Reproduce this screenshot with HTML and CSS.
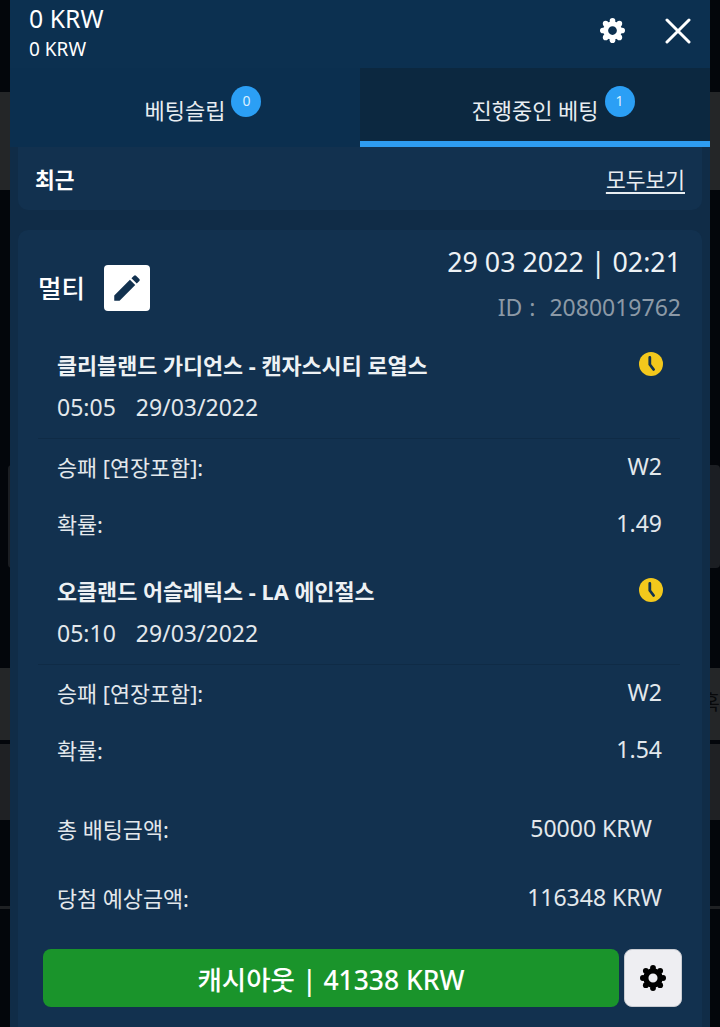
FILE: index.html
```html
<!DOCTYPE html>
<html lang="ko">
  <head>
    <meta charset="UTF-8" />
    <meta name="viewport" content="width=device-width, initial-scale=1.0" />
    <title>베팅슬립</title>
    <link rel="stylesheet" href="styles.css">
  </head>
  <body>
    <svg class="icon-defs" width="0" height="0">
      <defs>
        <g id="gear">
          <circle cx="12" cy="12" r="6.6" fill="none" stroke="currentColor" stroke-width="4.8" />
          <circle cx="12" cy="2.7" r="2.7" />
          <circle cx="18.6" cy="5.4" r="2.7" />
          <circle cx="21.3" cy="12" r="2.7" />
          <circle cx="18.6" cy="18.6" r="2.7" />
          <circle cx="12" cy="21.3" r="2.7" />
          <circle cx="5.4" cy="18.6" r="2.7" />
          <circle cx="2.7" cy="12" r="2.7" />
          <circle cx="5.4" cy="5.4" r="2.7" />
        </g>
      </defs>
    </svg>

    <div class="backdrop">
      <div class="strip dark h92"></div>
      <div class="strip gray h98"></div>
      <div class="strip dark h275"></div>
      <div class="strip dark h103"><div class="strip-card"></div></div>
      <div class="strip dark h100"></div>
      <div class="strip gray h72"><span class="strip-text">혹</span></div>
      <div class="strip dark h4"></div>
      <div class="strip gray-dark h76"></div>
      <div class="strip dark h86"></div>
      <div class="strip dark-end"></div>
    </div>

    <div class="panel">
      <header class="top">
        <div class="balance">
          <div class="balance-main">0 KRW</div>
          <div class="balance-sub">0 KRW</div>
        </div>
        <div class="top-icons">
          <svg class="top-gear" viewBox="0 0 24 24"><use href="#gear" /></svg>
          <svg class="top-close" viewBox="0 0 26 26"><path d="M2 2l22 22M24 2L2 24" /></svg>
        </div>
      </header>

      <div class="tabs">
        <div class="tab">
          <span class="tab-label">베팅슬립<span class="badge">0</span></span>
        </div>
        <div class="tab active">
          <span class="tab-label">진행중인 베팅<span class="badge">1</span></span>
        </div>
      </div>

      <div class="content">
        <div class="recent">
          <span class="recent-title">최근</span>
          <a class="recent-all" href="#">모두보기</a>
        </div>

        <div class="bet-card">
          <div class="bet-head">
            <div class="bet-type">
              <span>멀티</span>
              <button class="edit-btn">
                <svg viewBox="0 0 24 24"><path d="M3 17.25V21h3.75L17.81 9.94l-3.75-3.75L3 17.25zM20.71 7.04a1 1 0 0 0 0-1.41l-2.34-2.34a1 1 0 0 0-1.41 0l-1.83 1.83 3.75 3.75 1.83-1.83z" /></svg>
              </button>
            </div>
            <div class="bet-meta">
              <div class="bet-date">29 03 2022 | 02:21</div>
              <div class="bet-id">ID :&nbsp; 2080019762</div>
            </div>
          </div>

          <div class="game">
            <div class="game-title">
              <span>클리블랜드 가디언스 - 캔자스시티 로열스</span>
              <svg class="clock" viewBox="0 0 24 24"><circle cx="12" cy="12" r="12" /><path d="M10.8 5.5v7l3.8 5" /></svg>
            </div>
            <div class="game-time"><span>05:05</span><span>29/03/2022</span></div>
          </div>
          <div class="row row-first"><span>승패 [연장포함]:</span><span class="value">W2</span></div>
          <div class="row"><span>확률:</span><span class="value">1.49</span></div>

          <div class="game game-next">
            <div class="game-title">
              <span>오클랜드 어슬레틱스 - LA 에인절스</span>
              <svg class="clock" viewBox="0 0 24 24"><circle cx="12" cy="12" r="12" /><path d="M10.8 5.5v7l3.8 5" /></svg>
            </div>
            <div class="game-time"><span>05:10</span><span>29/03/2022</span></div>
          </div>
          <div class="row row-first"><span>승패 [연장포함]:</span><span class="value">W2</span></div>
          <div class="row"><span>확률:</span><span class="value">1.54</span></div>

          <div class="row total"><span>총 배팅금액:</span><span class="value total-amount">50000 KRW</span></div>
          <div class="row win"><span>당첨 예상금액:</span><span class="value">116348 KRW</span></div>

          <div class="actions">
            <button class="cashout">캐시아웃 | 41338 KRW</button>
            <button class="cashout-gear">
              <svg viewBox="0 0 24 24"><use href="#gear" /></svg>
            </button>
          </div>
        </div>
      </div>
    </div>
  </body>
</html>
```

FILE: styles.css
```css
* {
  box-sizing: border-box;
}

html,
body {
  height: 100%;
}

body {
  margin: 0;
  position: relative;
  overflow: hidden;
  background-color: #02050a;
  color: #fff;
  font-family: "Noto Sans", "Noto Sans CJK KR", sans-serif;
}

.icon-defs {
  position: absolute;
}

.backdrop {
  display: flex;
  flex-direction: column;
  height: 100%;
}

.strip {
  flex-shrink: 0;
}

.dark {
  background-color: #03060b;
}

.gray {
  background-color: #242628;
}

.gray-dark {
  background-color: #1f2124;
}

.h4 {
  height: 4px;
}

.h92 {
  height: 92px;
}

.h98 {
  height: 98px;
}

.h275 {
  height: 275px;
}

.h103 {
  height: 103px;
}

.h100 {
  height: 100px;
}

.h72 {
  height: 72px;
  padding-top: 20px;
  text-align: right;
}

.h76 {
  height: 76px;
}

.h86 {
  height: 86px;
}

.dark-end {
  flex: 1;
  background-color: #03060b;
  border-top: 3px solid #1f2124;
}

.strip-card {
  height: 100%;
  margin-left: 8px;
  border-radius: 4px;
  background-color: #1b1e23;
}

.strip-text {
  font-size: 20px;
  line-height: 30px;
  color: #08090b;
}

/* drawer over the page */
.panel {
  position: absolute;
  top: 0;
  bottom: 0;
  left: 10px;
  width: 700px;
  display: flex;
  flex-direction: column;
  background-color: #0c3050;
}

.top {
  height: 68px;
  flex-shrink: 0;
  display: flex;
  justify-content: space-between;
  padding-left: 19px;
}

.balance-main {
  margin-top: 2px;
  font-size: 24.8px;
  line-height: 32px;
}

.balance-sub {
  margin-top: 3px;
  font-size: 19px;
  line-height: 25px;
}

.top-icons {
  display: flex;
  align-items: center;
  gap: 40px;
  padding-right: 19px;
  padding-bottom: 7px;
}

.top-gear {
  width: 25px;
  height: 25px;
  fill: #fff;
  color: #fff;
}

.top-close {
  width: 26px;
  height: 26px;
  fill: none;
  stroke: #fff;
  stroke-width: 3;
  stroke-linecap: round;
}

.tabs {
  display: flex;
  height: 79px;
  flex-shrink: 0;
}

.tab {
  flex: 1;
  display: flex;
  justify-content: center;
  align-items: flex-start;
  padding-top: 28px;
  font-size: 22px;
  line-height: 28px;
  color: #e8edf1;
  background-color: #0b2f4f;
}

.tab.active {
  background-color: #0c2840;
  border-bottom: 6px solid #2e9cf0;
}

.tab-label {
  position: relative;
}

.badge {
  position: absolute;
  top: -10px;
  left: calc(100% + 6px);
  width: 30px;
  height: 31px;
  border-radius: 50%;
  background-color: #2b9ff5;
  font-size: 14px;
  line-height: 30px;
  text-align: center;
  color: #dcefff;
}

.content {
  flex: 1;
  display: flex;
  flex-direction: column;
  gap: 20px;
  padding: 0 8px;
  background-color: #102c47;
  min-height: 0;
}

.recent {
  height: 63px;
  flex-shrink: 0;
  display: flex;
  justify-content: space-between;
  align-items: center;
  padding: 0 17px 1px 17px;
  background-color: #12314f;
  border-radius: 0 0 10px 10px;
}

.recent-title {
  font-size: 21.5px;
  font-weight: 700;
}

.recent-all {
  font-size: 21.5px;
  color: #e8edf1;
  text-underline-offset: 4px;
}

.bet-card {
  flex: 1;
  padding: 0 21px 0 20px;
  background-color: #12314f;
  border-radius: 10px 10px 0 0;
}

.bet-head {
  display: flex;
  justify-content: space-between;
  height: 116px;
}

.bet-type {
  display: flex;
  align-items: flex-start;
  gap: 19px;
  padding-top: 35px;
  font-size: 25.5px;
  font-weight: 500;
}

.bet-type span {
  line-height: 46px;
}

.edit-btn {
  width: 46px;
  height: 46px;
  padding: 6px;
  border: none;
  border-radius: 4px;
  background-color: #fff;
}

.edit-btn svg {
  display: block;
  width: 34px;
  height: 34px;
  fill: #12314f;
}

.bet-meta {
  text-align: right;
}

.bet-date {
  margin-top: 14px;
  font-size: 26.8px;
  line-height: 36px;
  color: #eef2f5;
}

.bet-id {
  margin-top: 12px;
  font-size: 23px;
  line-height: 30px;
  word-spacing: 1px;
  color: #8c99a6;
}

.game {
  padding: 0 18px 15px 19px;
  border-bottom: 1px solid #0f2b46;
  margin-right: 1px;
}

.game-title {
  display: flex;
  justify-content: space-between;
  align-items: center;
  height: 36px;
  font-size: 21.8px;
  font-weight: 700;
  color: #edf1f4;
}

.clock {
  width: 24px;
  height: 24px;
  margin-right: -1px;
  fill: #f3c81c;
}

.clock path {
  fill: none;
  stroke: #12314f;
  stroke-width: 2.8;
  stroke-linecap: round;
  stroke-linejoin: round;
}

.game-time {
  display: flex;
  gap: 20px;
  margin-top: 10px;
  font-size: 23px;
  line-height: 31px;
  color: #e3e8ec;
}

.game-next {
  margin-top: 19px;
}

.row {
  display: flex;
  justify-content: space-between;
  align-items: center;
  height: 60px;
  padding: 0 19px;
  font-size: 21.8px;
  color: #e3e8ec;
}

.row-first {
  height: 54px;
}

.value {
  font-size: 23px;
}

.total {
  height: 76px;
  margin-top: 11px;
}

.total-amount {
  margin-right: 10px;
}

.win {
  height: 60px;
  margin-top: 1px;
}

.actions {
  display: flex;
  gap: 5px;
  margin-top: 22px;
  margin-right: -1px;
  padding-left: 5px;
}

.cashout {
  flex: 1;
  height: 58px;
  border: none;
  border-radius: 8px;
  background-color: #1a942b;
  color: #fff;
  font-family: inherit;
  font-size: 26.5px;
  font-weight: 500;
}

.cashout-gear {
  width: 58px;
  height: 58px;
  padding: 0;
  border: 1px solid #c9ccd2;
  border-radius: 8px;
  background-color: #eeeef2;
  color: #000;
  display: flex;
  align-items: center;
  justify-content: center;
}

.cashout-gear svg {
  width: 26px;
  height: 26px;
  fill: #000;
}
```
